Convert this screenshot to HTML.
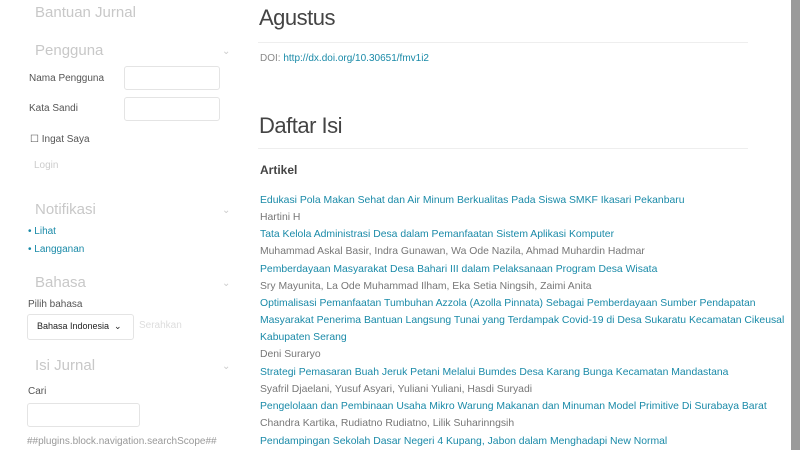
<!DOCTYPE html>
<html><head><meta charset="utf-8"><style>
*{margin:0;padding:0;box-sizing:border-box}
body{width:800px;height:450px;overflow:hidden;background:#fff;font-family:"Liberation Sans",sans-serif;position:relative;color:#555}
.a{position:absolute;white-space:nowrap}
.h{color:#c8c8c8;font-size:15px}
.chev{color:#ccc;font-size:10px}
.lbl{font-size:10px;color:#555}
.inp{position:absolute;border:1px solid #e4e4e4;border-radius:3px;background:#fff}
.lk{color:#1a8aa8}
.main div{position:absolute;left:260px;white-space:nowrap;font-size:10.4px;letter-spacing:0}
.t{color:#1a8aa8}
.au{color:#777}
</style></head><body>
<div class="a h" style="left:35px;top:4px">Bantuan Jurnal</div>
<div class="a h" style="left:35px;top:42px">Pengguna</div><div class="a chev" style="left:222px;top:46px">⌄</div>
<div class="a lbl" style="left:29px;top:73px">Nama Pengguna</div><div class="inp" style="left:124px;top:66px;width:96px;height:24px"></div>
<div class="a lbl" style="left:29px;top:103px">Kata Sandi</div><div class="inp" style="left:124px;top:97px;width:96px;height:24px"></div>
<div class="a lbl" style="left:30px;top:134px">☐ Ingat Saya</div>
<div class="a" style="left:34px;top:160px;font-size:10px;color:#ccc">Login</div>
<div class="a h" style="left:35px;top:201px">Notifikasi</div><div class="a chev" style="left:222px;top:205px">⌄</div>
<div class="a lbl lk" style="left:28px;top:226px">• Lihat</div>
<div class="a lbl lk" style="left:28px;top:244px">• Langganan</div>
<div class="a h" style="left:35px;top:274px">Bahasa</div><div class="a chev" style="left:222px;top:278px">⌄</div>
<div class="a lbl" style="left:28px;top:299px">Pilih bahasa</div>
<div class="inp" style="left:27px;top:314px;width:107px;height:26px"></div>
<div class="a" style="left:37px;top:321px;font-size:9px;color:#222">Bahasa Indonesia &nbsp;⌄</div>
<div class="a" style="left:139px;top:320px;font-size:10px;color:#ddd">Serahkan</div>
<div class="a h" style="left:35px;top:357px">Isi Jurnal</div><div class="a chev" style="left:222px;top:361px">⌄</div>
<div class="a lbl" style="left:28px;top:386px">Cari</div>
<div class="inp" style="left:27px;top:403px;width:113px;height:24px"></div>
<div class="a" style="left:27px;top:436px;font-size:10px;color:#999">##plugins.block.navigation.searchScope##</div>

<div class="a" style="left:259px;top:5px;font-size:22px;color:#444;letter-spacing:-0.5px">Agustus</div>
<div class="a" style="left:258px;top:42px;width:490px;height:1px;background:#eee"></div>
<div class="a" style="left:260px;top:53px;font-size:10px;color:#888">DOI: <span class="lk">http://dx.doi.org/10.30651/fmv1i2</span></div>
<div class="a" style="left:259px;top:113px;font-size:22px;color:#444;letter-spacing:-0.5px">Daftar Isi</div>
<div class="a" style="left:258px;top:148px;width:490px;height:1px;background:#eee"></div>
<div class="a" style="left:260px;top:163px;font-size:12px;font-weight:bold;color:#444">Artikel</div>
<div class="main">
<div class="t" style="top:195px">Edukasi Pola Makan Sehat dan Air Minum Berkualitas Pada Siswa SMKF Ikasari Pekanbaru</div>
<div class="au" style="top:212px">Hartini H</div>
<div class="t" style="top:229px">Tata Kelola Administrasi Desa dalam Pemanfaatan Sistem Aplikasi Komputer</div>
<div class="au" style="top:246px">Muhammad Askal Basir, Indra Gunawan, Wa Ode Nazila, Ahmad Muhardin Hadmar</div>
<div class="t" style="top:264px">Pemberdayaan Masyarakat Desa Bahari III dalam Pelaksanaan Program Desa Wisata</div>
<div class="au" style="top:281px">Sry Mayunita, La Ode Muhammad Ilham, Eka Setia Ningsih, Zaimi Anita</div>
<div class="t" style="top:298px">Optimalisasi Pemanfaatan Tumbuhan Azzola (Azolla Pinnata) Sebagai Pemberdayaan Sumber Pendapatan</div>
<div class="t" style="top:315px">Masyarakat Penerima Bantuan Langsung Tunai yang Terdampak Covid-19 di Desa Sukaratu Kecamatan Cikeusal</div>
<div class="t" style="top:332px">Kabupaten Serang</div>
<div class="au" style="top:349px">Deni Suraryo</div>
<div class="t" style="top:367px">Strategi Pemasaran Buah Jeruk Petani Melalui Bumdes Desa Karang Bunga Kecamatan Mandastana</div>
<div class="au" style="top:384px">Syafril Djaelani, Yusuf Asyari, Yuliani Yuliani, Hasdi Suryadi</div>
<div class="t" style="top:401px">Pengelolaan dan Pembinaan Usaha Mikro Warung Makanan dan Minuman Model Primitive Di Surabaya Barat</div>
<div class="au" style="top:418px">Chandra Kartika, Rudiatno Rudiatno, Lilik Suharinngsih</div>
<div class="t" style="top:436px">Pendampingan Sekolah Dasar Negeri 4 Kupang, Jabon dalam Menghadapi New Normal</div>
</div>
<div class="a" style="left:791px;top:0;width:9px;height:450px;background:#9a9a9a"></div>
</body></html>
